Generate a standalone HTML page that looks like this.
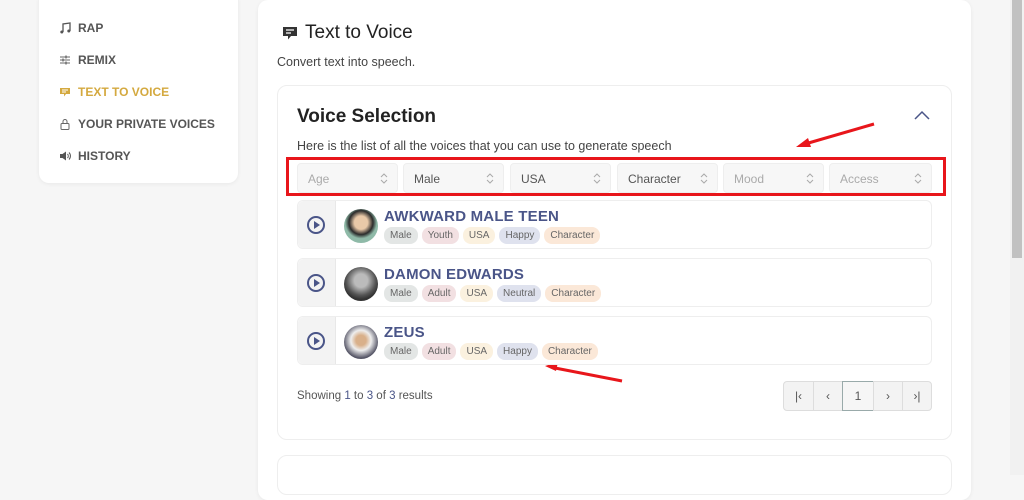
<!DOCTYPE html><html><head><style>
*{box-sizing:border-box;margin:0;padding:0}
html,body{width:1024px;height:475px}
body{background:#f6f6f6;font-family:"Liberation Sans",sans-serif;position:relative;overflow:hidden;color:#333}
.card{position:absolute;background:#fff;border-radius:10px;box-shadow:0 1px 4px rgba(0,0,0,.06)}
.nav{position:absolute;left:59px;font-size:12px;font-weight:bold;color:#555;display:flex;align-items:center;gap:7px}
.nav svg{width:12px;height:12px}
.sel{position:absolute;top:163px;height:30px;width:101px;background:#f7f7f7;border:1px solid #eee;border-radius:4px;font-size:12px;color:#aaa;padding:8px 10px}
.sel svg{position:absolute;right:9px;top:8px}
.row{position:absolute;left:297px;width:635px;height:49px;border:1px solid #eee;border-radius:6px;background:#fff}
.row .pl{position:absolute;left:0;top:0;width:38px;height:47px;background:#f3f3f3;border-right:1px solid #e8e8e8;border-radius:6px 0 0 6px}
.row .pl i{position:absolute;left:9px;top:15px;width:18px;height:18px;border:2px solid #4a5588;border-radius:50%}
.row .pl i:after{content:"";position:absolute;left:5px;top:3px;border-left:6px solid #4a5588;border-top:4px solid transparent;border-bottom:4px solid transparent}
.av{position:absolute;left:46px;top:8px;width:34px;height:34px;border-radius:50%}
.nm{position:absolute;left:86px;top:7px;font-size:15px;color:#4a5588;font-weight:bold;letter-spacing:.2px}
.tags{position:absolute;left:86px;top:26px;display:flex;gap:4px}
.tags span{font-size:10px;color:#666;padding:3px 6px;border-radius:8px}
.t1{background:#e3e6e5}.t2{background:#f2e0e2}.t3{background:#fbf1df}.t4{background:#dfe2ee}.t5{background:#fbe8d8}
.pg{position:absolute;top:381px;height:30px;background:#f3f3f3;border:1px solid #ddd;font-size:12px;color:#555;text-align:center;line-height:28px}
</style></head><body>
<div class="card" style="left:39px;top:-10px;width:199px;height:193px"></div>
<div class="nav" style="top:21px"><svg viewBox="0 0 12 12"><path d="M4 10V2l7-1v8" stroke="#555" stroke-width="1.3" fill="none"/><circle cx="2.8" cy="10" r="1.5" fill="#555"/><circle cx="9.8" cy="9" r="1.5" fill="#555"/></svg>RAP</div>
<div class="nav" style="top:53px"><svg viewBox="0 0 12 12"><path d="M1 3h10M1 6h10M1 9h10" stroke="#666" stroke-width="1"/><path d="M7 1.5v3M4 4.5v3M7 7.5v3" stroke="#666" stroke-width="1.3"/></svg>REMIX</div>
<div class="nav" style="top:85px;color:#d4a93f"><svg viewBox="0 0 12 12"><path d="M1 2h10v6H7l-2 2.5V8H1z" fill="#d4a93f"/><path d="M3 4h6M3 6h4" stroke="#fff" stroke-width=".9"/></svg>TEXT TO VOICE</div>
<div class="nav" style="top:117px"><svg viewBox="0 0 12 12"><rect x="2" y="5.5" width="8" height="6" rx="1" stroke="#666" fill="none"/><path d="M4 5.5V3.5a2 2 0 0 1 4 0v2" stroke="#666" fill="none"/></svg>YOUR PRIVATE VOICES</div>
<div class="nav" style="top:149px"><svg viewBox="0 0 12 12"><path d="M1 4h2.5L7 1.5v9L3.5 8H1z" fill="#555"/><path d="M8.5 4a3 3 0 0 1 0 4M10 2.5a5 5 0 0 1 0 7" stroke="#555" fill="none"/></svg>HISTORY</div>

<div class="card" style="left:258px;top:0;width:713px;height:500px"></div>
<svg style="position:absolute;left:282px;top:25px" width="16" height="16" viewBox="0 0 16 16"><path d="M1 2h14v9H9l-3 3.5V11H1z" fill="#333"/><path d="M4 5h8M4 8h5" stroke="#fff" stroke-width="1.2"/></svg>
<div style="position:absolute;left:305px;top:22px;font-size:19px;color:#222">Text to Voice</div>
<div style="position:absolute;left:277px;top:55px;font-size:12.5px;color:#444">Convert text into speech.</div>

<div class="card" style="left:277px;top:85px;width:675px;height:355px;border:1px solid #eee;box-shadow:none"></div>
<div class="card" style="left:277px;top:455px;width:675px;height:40px;border:1px solid #eee;box-shadow:none"></div>
<div style="position:absolute;left:297px;top:106px;font-size:19px;color:#222;font-weight:bold">Voice Selection</div>
<svg style="position:absolute;left:914px;top:110px" width="16" height="10"><path d="M1 9l7-7 7 7" stroke="#4a5588" stroke-width="1.5" fill="none"/></svg>
<div style="position:absolute;left:297px;top:139px;font-size:12.5px;color:#444">Here is the list of all the voices that you can use to generate speech</div>

<div class="sel" style="left:297px">Age<svg width="8" height="13"><path d="M1 5l3-3 3 3M1 8l3 3 3-3" stroke="#aaa" fill="none"/></svg></div>
<div class="sel" style="left:403px;color:#555">Male<svg width="8" height="13"><path d="M1 5l3-3 3 3M1 8l3 3 3-3" stroke="#aaa" fill="none"/></svg></div>
<div class="sel" style="left:510px;color:#555">USA<svg width="8" height="13"><path d="M1 5l3-3 3 3M1 8l3 3 3-3" stroke="#aaa" fill="none"/></svg></div>
<div class="sel" style="left:617px;color:#555">Character<svg width="8" height="13"><path d="M1 5l3-3 3 3M1 8l3 3 3-3" stroke="#aaa" fill="none"/></svg></div>
<div class="sel" style="left:723px">Mood<svg width="8" height="13"><path d="M1 5l3-3 3 3M1 8l3 3 3-3" stroke="#aaa" fill="none"/></svg></div>
<div class="sel" style="left:829px;width:103px">Access<svg width="8" height="13"><path d="M1 5l3-3 3 3M1 8l3 3 3-3" stroke="#aaa" fill="none"/></svg></div>
<div style="position:absolute;left:286px;top:157px;width:660px;height:39px;border:3px solid #e8161b"></div>
<svg style="position:absolute;left:0;top:0" width="1024" height="475"><path d="M874 124L805 144" stroke="#e8161b" stroke-width="3"/><path d="M796 147l12-9 3 9z" fill="#e8161b"/><path d="M622 381L555 368" stroke="#e8161b" stroke-width="3"/><path d="M545 366l13-4-2 9z" fill="#e8161b"/></svg>

<div class="row" style="top:200px"><div class="pl"><i></i></div><div class="av" style="background:radial-gradient(circle at 50% 40%,#e9c9a8 25%,#2b2b2b 45%,#8fbaa8 60%)"></div><div class="nm">AWKWARD MALE TEEN</div><div class="tags"><span class="t1">Male</span><span class="t2">Youth</span><span class="t3">USA</span><span class="t4">Happy</span><span class="t5">Character</span></div></div>
<div class="row" style="top:258px"><div class="pl"><i></i></div><div class="av" style="background:radial-gradient(circle at 50% 40%,#bbb 25%,#555 55%,#333 70%)"></div><div class="nm">DAMON EDWARDS</div><div class="tags"><span class="t1">Male</span><span class="t2">Adult</span><span class="t3">USA</span><span class="t4">Neutral</span><span class="t5">Character</span></div></div>
<div class="row" style="top:316px"><div class="pl"><i></i></div><div class="av" style="background:radial-gradient(circle at 50% 45%,#d9b08a 20%,#eee 40%,#556 70%)"></div><div class="nm">ZEUS</div><div class="tags"><span class="t1">Male</span><span class="t2">Adult</span><span class="t3">USA</span><span class="t4">Happy</span><span class="t5">Character</span></div></div>

<div style="position:absolute;left:297px;top:390px;font-size:11.5px;color:#555">Showing <span style="color:#4a5588">1</span> to <span style="color:#4a5588">3</span> of <span style="color:#4a5588">3</span> results</div>
<div class="pg" style="left:783px;width:31px;border-radius:4px 0 0 4px">|‹</div>
<div class="pg" style="left:813px;width:30px">‹</div>
<div class="pg" style="left:842px;width:32px;background:#f6f6f6;border-color:#9aa">1</div>
<div class="pg" style="left:873px;width:30px">›</div>
<div class="pg" style="left:902px;width:30px;border-radius:0 4px 4px 0">›|</div>

<div style="position:absolute;left:1010px;top:0;width:14px;height:475px;background:#f1f1f1"></div>
<div style="position:absolute;left:1012px;top:0;width:10px;height:258px;background:#c1c1c1"></div>
</body></html>
